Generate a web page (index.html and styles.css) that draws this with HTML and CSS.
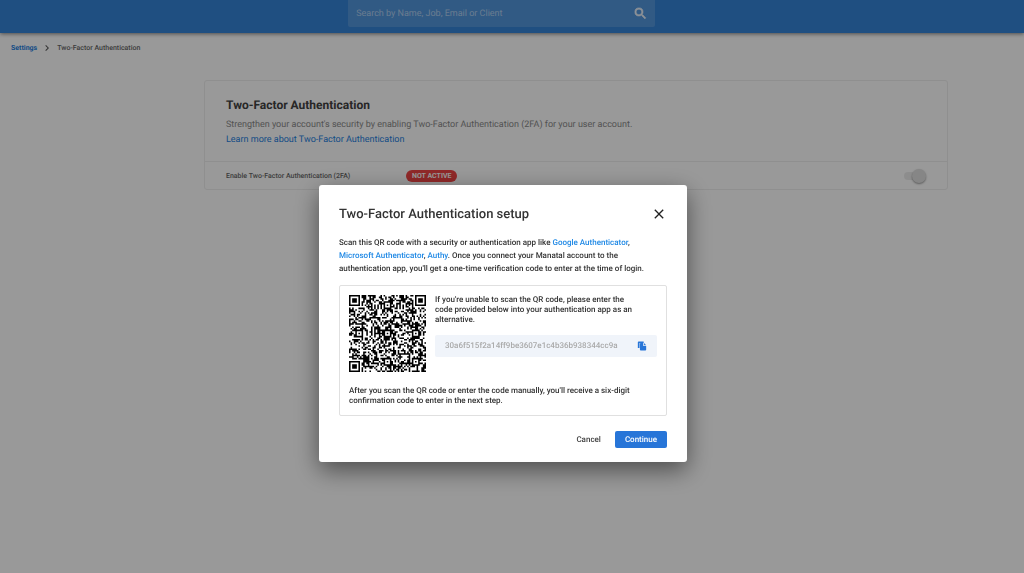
FILE: index.html
```html
<!DOCTYPE html>
<html lang="en">
<head>
    <meta charset="UTF-8">
    <meta name="viewport" content="width=device-width, initial-scale=1.0">
    <title>Two-Factor Authentication</title>
    <link rel="stylesheet" href="styles.css">
</head>
<body>
    <header class="topbar">
        <form class="search">
            <input type="search" class="search-input" aria-label="Search" placeholder="Search by Name, Job, Email or Client">
            <button type="button" class="search-btn" aria-label="Search">
                <svg viewBox="0 0 24 24" width="15" height="15" fill="currentColor" stroke="currentColor"><path d="M15.5 14h-.79l-.28-.27A6.471 6.471 0 0 0 16 9.5 6.5 6.5 0 1 0 9.5 16c1.61 0 3.09-.59 4.23-1.57l.27.28v.79l5 4.99L20.49 19l-4.99-5zm-6 0C7.01 14 5 11.99 5 9.5S7.01 5 9.5 5 14 7.01 14 9.5 11.99 14 9.5 14z"/></svg>
            </button>
        </form>
    </header>

    <nav class="breadcrumb">
        <a href="#">Settings</a>
        <svg viewBox="0 0 24 24" width="12" height="12" fill="currentColor"><path d="M10 6 8.59 7.41 13.17 12l-4.58 4.59L10 18l6-6z"/></svg>
        <span>Two-Factor Authentication</span>
    </nav>

    <main class="card">
        <section class="card-intro">
            <h1>Two-Factor Authentication</h1>
            <p>Strengthen your account's security by enabling Two-Factor Authentication (2FA) for your user account.</p>
            <a href="#">Learn more about Two-Factor Authentication</a>
        </section>
        <div class="card-row">
            <label for="enable-2fa">Enable Two-Factor Authentication (2FA)</label>
            <span class="status">NOT ACTIVE</span>
            <input type="checkbox" id="enable-2fa" class="switch">
        </div>
    </main>

    <!-- Setup modal -->
    <div class="overlay">
        <div class="modal" role="dialog" aria-labelledby="modal-title">
            <div class="modal-header">
                <h2 id="modal-title">Two-Factor Authentication setup</h2>
                <button type="button" class="close-btn" aria-label="Close">
                    <svg viewBox="0 0 24 24" width="16" height="16" fill="currentColor"><path d="M19 6.41 17.59 5 12 10.59 6.41 5 5 6.41 10.59 12 5 17.59 6.41 19 12 13.41 17.59 19 19 17.59 13.41 12z"/></svg>
                </button>
            </div>
            <p class="modal-text">Scan this QR code with a security or authentication app like <a href="#">Google Authenticator</a>,<br> <a href="#">Microsoft Authenticator</a>, <a href="#">Authy</a>. Once you connect your Manatal account to the<br> authentication app, you'll get a one-time verification code to enter at the time of login.</p>

            <div class="setup-box">
                <div class="setup-top">
                    <svg class="qr" id="qr" viewBox="0 0 49 49" role="img" aria-label="QR code"></svg>
                    <div class="setup-manual">
                        <p>If you're unable to scan the QR code, please enter the<br> code provided below into your authentication app as an<br> alternative.</p>
                        <div class="secret">
                            <span>30a6f515f2a14ff9be3607e1c4b36b938344cc9a</span>
                            <button type="button" class="copy-btn" aria-label="Copy code">
                                <svg viewBox="0 0 24 24" width="10" height="10" fill="currentColor"><path d="M16 1H4a2 2 0 0 0-2 2v14h4V5h10z"/><path d="M15 5H9a2 2 0 0 0-2 2v14a2 2 0 0 0 2 2h11a2 2 0 0 0 2-2v-9h-7z"/><path d="M17 5l5 5h-5z"/></svg>
                            </button>
                        </div>
                    </div>
                </div>
                <p>After you scan the QR code or enter the code manually, you'll receive a six-digit<br> confirmation code to enter in the next step.</p>
            </div>

            <div class="modal-actions">
                <button type="button" class="cancel-btn">Cancel</button>
                <button type="button" class="continue-btn">Continue</button>
            </div>
        </div>
    </div>

    <script src="qr.js"></script>
</body>
</html>
```
FILE: styles.css
```css
* {
    box-sizing: border-box;
}

body {
    margin: 0;
    font-family: Roboto, sans-serif;
    font-size: 8px;
    font-weight: 500;
    color: #333;
    background: #fff;
    text-rendering: geometricPrecision;
}

h1, h2, p {
    margin: 0;
}

a {
    color: #1e80e0;
    text-decoration: none;
}

button, input {
    font: inherit;
    text-rendering: inherit;
    border: none;
    padding: 0;
    background: none;
}

button {
    cursor: pointer;
}

svg {
    display: block;
}

/* Top bar */
.topbar {
    height: 33px;
    background: #3484d8;
    box-shadow: 0 1px 4px rgba(0, 0, 0, 0.5);
}

.search {
    display: flex;
    align-items: center;
    width: 30%;
    height: 27px;
    margin-left: 34%;
    padding: 0 7px 0 8px;
    border-radius: 0 0 2px 2px;
    background: rgba(255, 255, 255, 0.15);
}

.search-input {
    flex: 1;
    outline: none;
    font-size: 9px;
    font-weight: 400;
    color: #fff;
}

.search-input::placeholder {
    color: rgba(255, 255, 255, 0.55);
}

.search-btn {
    color: rgba(255, 255, 255, 0.85);
}

/* Breadcrumb */
.breadcrumb {
    display: flex;
    align-items: center;
    gap: 4px;
    padding: 9px 11px;
    font-size: 7px;
    color: #666;
}

.breadcrumb a {
    font-weight: 700;
}

.breadcrumb svg {
    color: #555;
}

/* Settings card */
.card {
    margin: 17px 76px 0 204px;
    border: 1px solid #eee;
    border-radius: 3px;
}

.card-intro {
    padding: 16px 21px 13px;
    font-size: 9px;
    font-weight: 400;
    line-height: 15px;
    color: #8a8a8a;
}

.card-intro h1 {
    margin-bottom: 5px;
    font-size: 12px;
    font-weight: 700;
    line-height: 16px;
    color: #424242;
}

.card-row {
    display: flex;
    align-items: center;
    height: 28px;
    padding: 0 27px 0 21px;
    border-top: 1px solid #eee;
    font-size: 7px;
    color: #666;
}

.card-row label {
    width: 180px;
}

.status {
    padding: 0 6px;
    border-radius: 6px;
    line-height: 12px;
    font-weight: 700;
    color: #fff;
    background: #f04444;
}

.switch {
    appearance: none;
    display: flex;
    align-items: center;
    justify-content: flex-end;
    width: 16px;
    height: 8px;
    margin: 0 0 0 auto;
    border-radius: 4px;
    background: #ececec;
}

.switch::before {
    content: "";
    flex: none;
    width: 14px;
    height: 14px;
    margin-right: -6px;
    border-radius: 50%;
    background: #e0e0e0;
    box-shadow: 0 1px 2px rgba(0, 0, 0, 0.4);
}

/* Modal */
.overlay {
    position: fixed;
    inset: 0;
    display: flex;
    align-items: center;
    justify-content: center;
    padding: 74px 18px 0 0;
    background: rgba(0, 0, 0, 0.4);
}

.modal {
    width: 368px;
    padding: 19px 20px 14px;
    border-radius: 3px;
    background: #fff;
    box-shadow: 0 8px 24px rgba(0, 0, 0, 0.5);
}

.modal-header {
    display: flex;
    align-items: center;
    justify-content: space-between;
    height: 20px;
}

.modal-header h2 {
    font-size: 13px;
    font-weight: 500;
}

.close-btn {
    color: #212121;
}

.modal-text {
    margin: 12px 0 10px;
    line-height: 13px;
}

.modal-text a {
    color: #1e88e5;
}

.setup-box {
    padding: 9px;
    border: 1px solid #e0e0e0;
    border-radius: 2px;
    line-height: 10px;
}

.setup-top {
    display: flex;
    gap: 9px;
    margin-bottom: 14px;
}

.qr {
    flex: none;
    width: 77px;
    height: 77px;
}

.setup-manual {
    flex: 1;
}

.secret {
    display: flex;
    align-items: center;
    justify-content: space-between;
    height: 22px;
    margin-top: 10px;
    padding: 0 10px;
    border-radius: 2px;
    color: #aaa;
    background: #f0f4fa;
}

.copy-btn {
    color: #2775d8;
}

.modal-actions {
    display: flex;
    justify-content: flex-end;
    gap: 14px;
    margin-top: 15px;
}

.cancel-btn {
    color: #424242;
}

.continue-btn {
    height: 17px;
    padding: 0 10px;
    border-radius: 2px;
    color: #fff;
    background: #2775d8;
}
```
FILE: qr.js
```js
const SIZE = 49;
const qr = document.getElementById("qr");
const finders = [[3, 3], [45, 3], [3, 45]];
const alignments = [[24, 6], [6, 24], [24, 24], [42, 24], [24, 42], [42, 42]];

let seed = 30615;

function randomBit() {
    seed = (seed * 1103515245 + 12345) % 2147483648;
    return seed / 2147483648 < 0.5;
}

function isDark(x, y) {
    const bit = randomBit();
    for (const [cx, cy] of finders) {
        const d = Math.max(Math.abs(x - cx), Math.abs(y - cy));
        if (d <= 4) return d === 3 || d <= 1;
    }
    for (const [cx, cy] of alignments) {
        const d = Math.max(Math.abs(x - cx), Math.abs(y - cy));
        if (d <= 2) return d !== 1;
    }
    if (x === 6 || y === 6) return (x + y) % 2 === 0;
    return bit;
}

let d = "";
for (let y = 0; y < SIZE; y++) {
    for (let x = 0; x < SIZE; x++) {
        if (isDark(x, y)) d += `M${x} ${y}h1v1h-1z`;
    }
}
qr.innerHTML = `<path d="${d}"/>`;
```
